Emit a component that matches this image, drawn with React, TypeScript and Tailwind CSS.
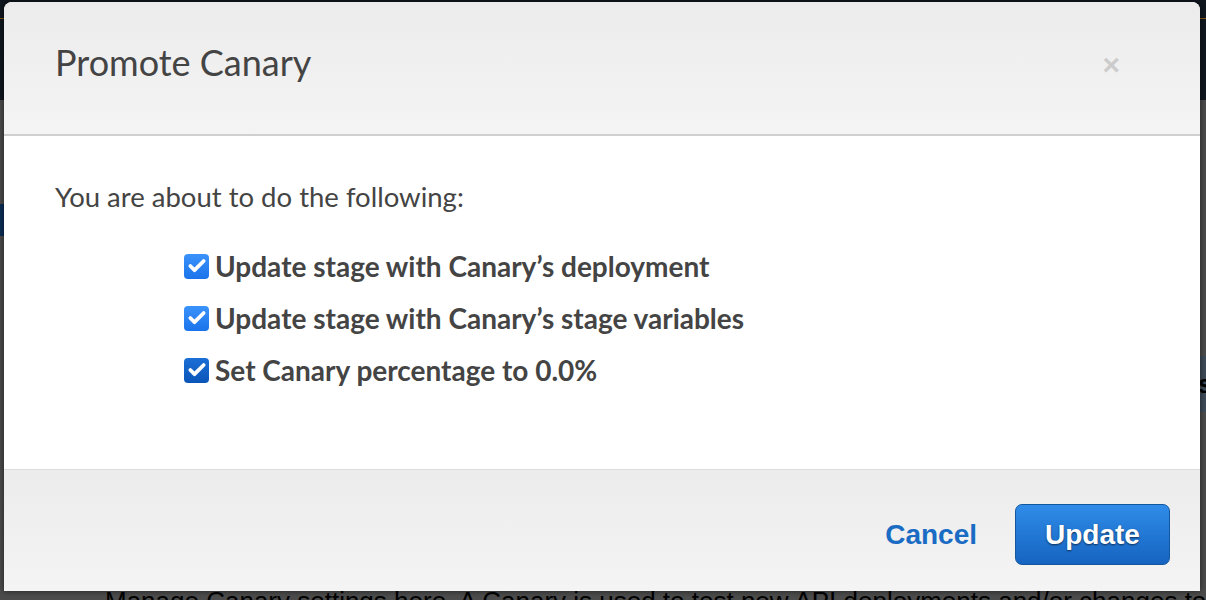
import { Check } from "lucide-react";

const actions = [
  "Update stage with Canary’s deployment",
  "Update stage with Canary’s stage variables",
  "Set Canary percentage to 0.0%",
];

function CheckBox({ dark }: { dark?: boolean }) {
  return (
    <span
      className={
        dark
          ? "flex h-[25px] w-[25px] shrink-0 items-center justify-center rounded-[4px] bg-gradient-to-b from-[#1b6fd6] to-[#0b55b8]"
          : "flex h-[25px] w-[25px] shrink-0 items-center justify-center rounded-[4px] bg-gradient-to-b from-[#3a93fb] to-[#1a73ea]"
      }
    >
      <Check size={20} strokeWidth={4.5} color="#ffffff" />
    </span>
  );
}

function BackgroundPage() {
  return (
    <div className="flex h-[600px] w-full flex-col bg-[#4c4c4c]">
      <div className="flex h-[100px] flex-col bg-[#10171f]">
        <div className="mt-[18px] h-px bg-[#8a5a14]" />
      </div>
      <div className="mt-[104px] h-[32px] w-[4px] bg-[#0c2e57]" />
      <div className="mt-[120px] flex h-[56px] justify-end">
        <div className="flex w-[8px] items-center bg-[#3f4c5a] font-['Liberation_Sans',sans-serif] text-[26px] font-bold text-black">
          s
        </div>
      </div>
      <div className="flex flex-1 flex-col justify-end">
        <p className="h-[14px] overflow-hidden whitespace-nowrap pl-[105px] font-['Liberation_Sans',sans-serif] text-[26px] leading-[30px] text-black">
          Manage Canary settings here. A Canary is used to test new API deployments and/or changes to stage variables.
        </p>
      </div>
    </div>
  );
}

function PromoteModal() {
  return (
    <div className="absolute left-[4px] top-[2px] flex h-[589px] w-[1196px] flex-col overflow-hidden rounded-t-[8px] bg-white shadow-[0_0_6px_rgba(0,0,0,0.6)]">
      <div className="flex h-[134px] items-center justify-between border-b-2 border-[#cfcfcf] bg-gradient-to-b from-[#ececec] to-[#f4f4f4] pb-[12px] pl-[51px] pr-[80px]">
        <h1 className="font-['Lato',sans-serif] text-[36px] text-[#444444]">Promote Canary</h1>
        <span className="pt-[4px] font-['Liberation_Sans',sans-serif] text-[30px] font-bold text-[#cccccc]">×</span>
      </div>
      <div className="flex flex-1 flex-col pl-[51px] pt-[40px] font-['Lato',sans-serif] text-[#444444]">
        <p className="text-[27.5px]">You are about to do the following:</p>
        <ul className="mt-[33px] flex flex-col gap-[20px] pl-[129px]">
          {actions.map((a, i) => (
            <li key={a} className="flex h-[32px] items-center gap-[6px] text-[28px] font-bold">
              <CheckBox dark={i === 2} />
              {a}
            </li>
          ))}
        </ul>
      </div>
      <div className="flex h-[122px] items-center justify-end gap-[38px] border-t border-[#dddddd] bg-gradient-to-b from-[#ececec] to-[#f4f4f4] pr-[30px] pt-[8px] font-['Liberation_Sans',sans-serif]">
        <button className="text-[28px] font-bold text-[#1a6bc4]">Cancel</button>
        <button className="h-[61px] w-[155px] rounded-[7px] border border-[#13579e] bg-gradient-to-b from-[#2f8ce8] to-[#1664c1] text-[28px] font-bold text-white [text-shadow:0_1px_2px_rgba(0,0,0,0.6)]">
          Update
        </button>
      </div>
    </div>
  );
}

export default function App() {
  return (
    <div className="relative h-[600px] w-[1206px] overflow-hidden">
      <BackgroundPage />
      <PromoteModal />
    </div>
  );
}
